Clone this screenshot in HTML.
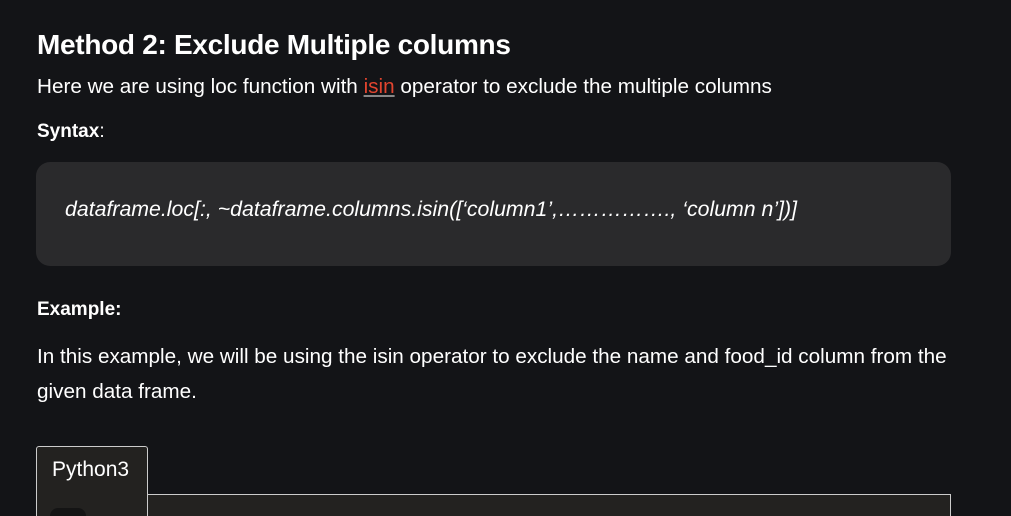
<!DOCTYPE html>
<html><head><meta charset="utf-8"><style>
html,body{margin:0;padding:0;background:#131417;width:1011px;height:516px;overflow:hidden;font-family:"Liberation Sans",sans-serif;color:#fff}
.a{position:absolute;white-space:nowrap}
h2{position:absolute;left:37px;top:29px;margin:0;font-size:28px;font-weight:bold;letter-spacing:-0.3px}
.p{font-size:20.7px}
a{color:#e2452f;text-decoration:underline;text-decoration-color:#888}
.code{position:absolute;left:36px;top:162px;width:915px;height:104px;background:#2a2a2c;border-radius:14px}
.tab{position:absolute;left:36px;top:446px;width:112px;height:70px;background:#232220;border:1px solid #ccc;border-bottom:none;border-radius:3px 3px 0 0;box-sizing:border-box}
.body{position:absolute;left:36px;top:494px;width:915px;height:22px;background:#232220;border:1px solid #ccc;border-bottom:none;box-sizing:border-box}
.circ{position:absolute;left:50px;top:508px;width:36px;height:8px;border-radius:18px 18px 0 0;background:#141414}
</style></head><body>
<h2>Method 2: Exclude Multiple columns</h2>
<div class="a p" style="left:37px;top:75px">Here we are using loc function with <a>isin</a> operator to exclude the multiple columns</div>
<div class="a" style="left:37px;top:121px;font-size:19px"><b>Syntax</b>:</div>
<div class="code"></div>
<div class="a" style="left:65px;top:197px;font-size:21.3px;font-style:italic">dataframe.loc[:, ~dataframe.columns.isin([‘column1’,……………., ‘column n’])]</div>
<div class="a" style="left:37px;top:299px;font-size:19px;font-weight:bold">Example:</div>
<div class="a p" style="left:37px;top:345px">In this example, we will be using the isin operator to exclude the name and food_id column from the</div>
<div class="a p" style="left:37px;top:380px">given data frame.</div>
<div class="body"></div>
<div class="tab"></div>
<div class="a" style="left:52px;top:458px;font-size:21px">Python3</div>
<div class="circ"></div>
</body></html>
